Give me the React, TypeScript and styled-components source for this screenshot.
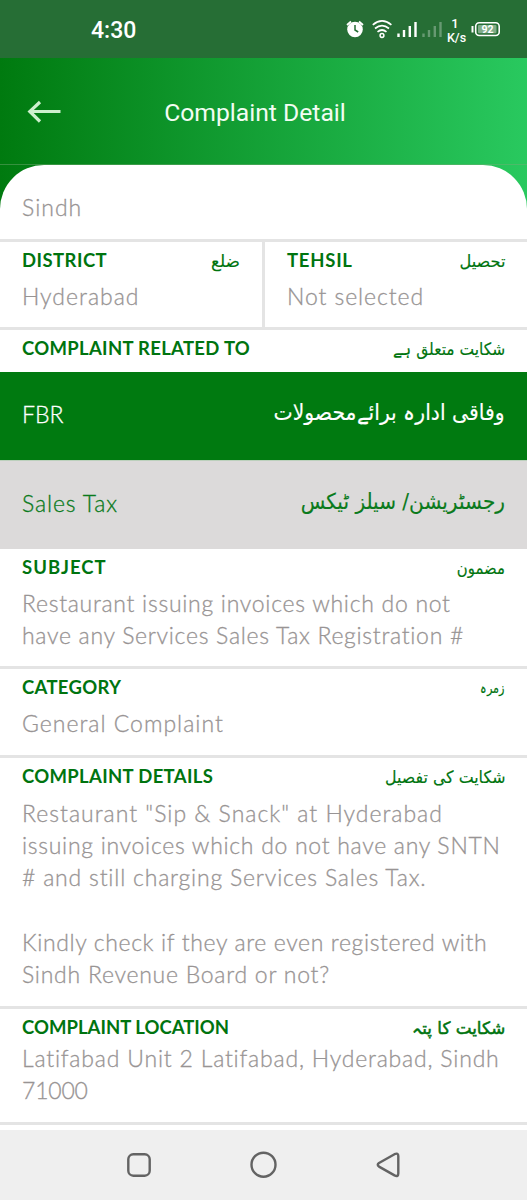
import React from "react";
import styled, { createGlobalStyle } from "styled-components";

const GlobalStyle = createGlobalStyle`
  * { box-sizing: border-box; }
  body { margin: 0; background: #fff; font-family: Lato, sans-serif; }
`;

const Screen = styled.div`
  width: 527px;
  height: 1200px;
  display: flex;
  flex-direction: column;
  overflow: hidden;
  background: #fff;
`;

const StatusBar = styled.header`
  height: 58px;
  flex: none;
  display: flex;
  align-items: center;
  justify-content: space-between;
  padding: 0 26px 0 91px;
  background: #266e35;
  color: #fff;
`;

const Clock = styled.span`
  font: 500 23px/28px Roboto, sans-serif;
  padding-top: 4px;
`;

const Backdrop = styled.div`
  flex: 1;
  min-height: 0;
  display: flex;
  flex-direction: column;
  background: linear-gradient(90deg, #007a0f 0%, #29c95f 100%) top / 100% 160px no-repeat;
`;

const TitleBar = styled.div`
  height: 107px;
  flex: none;
  display: grid;
  grid-template-columns: 100px 1fr 100px;
  align-items: center;
  padding: 0 8px 0 26px;
  border-bottom: 1px solid rgba(120, 170, 120, 0.45);
`;

const Title = styled.h1`
  margin: 0 35px 0 0;
  padding-top: 4px;
  display: flex;
  justify-content: center;
  color: #f3fdf3;
  white-space: nowrap;
  font: 400 24.7px/30px Roboto, sans-serif;
`;

const Sheet = styled.main`
  flex: 1;
  background: #fff;
  border-radius: 44px 44px 0 0;
`;

const Section = styled.section<{ $h: number; $plain?: boolean }>`
  height: ${(p) => p.$h}px;
  padding: 7px 22px 0;
  border-bottom: ${(p) => (p.$plain ? "0" : "3px solid #e4e4e4")};
`;

const Province = styled(Section)`
  padding-top: 26px;
`;

const Pair = styled.div`
  display: grid;
  grid-template-columns: 265px 262px;
  ${Section}:first-child {
    border-right: 3px solid #e4e4e4;
  }
`;

const Head = styled.div<{ $gap: number }>`
  display: flex;
  justify-content: space-between;
  height: 22px;
  margin-bottom: ${(p) => p.$gap}px;
`;

const Label = styled.h2<{ $track?: number }>`
  margin: 0;
  color: #00740f;
  white-space: nowrap;
  font: 700 18.5px/22px Lato, sans-serif;
  letter-spacing: ${(p) => p.$track ?? 0}px;
`;

const Urdu = styled.span<{ $size?: number; $bold?: boolean; $stretch?: number }>`
  direction: rtl;
  white-space: nowrap;
  font-family: "DejaVu Sans", sans-serif;
  font-size: ${(p) => p.$size ?? 17}px;
  line-height: 24px;
  -webkit-text-stroke: ${(p) => (p.$bold ? "0.5px" : "0.15px")} currentColor;
  transform: scaleX(${(p) => p.$stretch ?? 1});
  transform-origin: right;
  color: #00740f;
`;

const Line = styled.div<{ $track?: number }>`
  height: 32.2px;
  white-space: pre;
  color: #989494;
  font: 300 23px/32px Lato, sans-serif;
  -webkit-text-stroke: 0.3px currentColor;
  letter-spacing: ${(p) => p.$track ?? 1}px;
`;

const Band = styled.div<{ $tone: "green" | "grey" }>`
  height: ${(p) => (p.$tone === "green" ? 89 : 88)}px;
  display: flex;
  align-items: center;
  justify-content: space-between;
  padding: 0 22px 4px;
  background: ${(p) => (p.$tone === "green" ? "#007a10" : "#dcdada")};
  border-bottom: ${(p) => (p.$tone === "green" ? "1px solid #bcd0bc" : "0")};
  ${Line}, ${Urdu} {
    color: ${(p) => (p.$tone === "green" ? "#fff" : "#0b7a1c")};
  }
  ${Urdu} {
    padding-bottom: 2px;
  }
`;

const NavBar = styled.nav`
  height: 70px;
  flex: none;
  background: #efefef;
  display: flex;
  padding-left: 113px;
`;

const StatusIcons = () => (
  <svg width="156" height="34" viewBox="345 12 156 34" fill="none" stroke="#fff">
    <circle cx="355" cy="29.5" r="7.8" fill="#fff" stroke="none" />
    <path d="M347 25l4-3.500M363 25l-4-3.500" strokeWidth="1.8" />
    <path d="M355 25v5l3.2 2" stroke="#266e35" strokeWidth="1.5" />
    <circle cx="382" cy="35.5" r="1.9" strokeWidth="1.5" />
    <path d="M377.500 31.800q4.500-3.600 9 0M375 28.500q7-5.800 14 0M372.800 24.800q9.200-7.800 18.600 0" strokeWidth="1.7" />
    <path d="M398.500 37v-3.500M404 37v-7M409.800 37v-11M415.500 37v-15" strokeWidth="2.400" />
    <path d="M423.500 37v-3.500M429 37v-7M434.800 37v-11M440.500 37v-15" strokeWidth="2.400" opacity=".3" />
    <g fill="#fff" stroke="none" fontFamily="Roboto, sans-serif" fontWeight="500" textAnchor="middle">
      <text x="455" y="27.700" fontSize="13">1</text>
      <text x="456.500" y="41.700" fontSize="12.500">K/s</text>
    </g>
    <path d="M472.500 26v6.500" strokeWidth="2" />
    <rect x="475.700" y="22.700" width="23.500" height="12.800" rx="3.500" strokeWidth="1.600" />
    <rect x="478" y="25" width="18.500" height="8.200" rx="1" fill="#7fac88" stroke="none" />
    <text x="487.500" y="33" fontSize="10.500" fontWeight="700" fill="#fff" stroke="none" textAnchor="middle" fontFamily="Roboto, sans-serif">92</text>
  </svg>
);

const BackArrow = () => (
  <svg width="36" height="24" viewBox="26 98.500 36 24" fill="none" stroke="#cdf0cd" strokeWidth="3.200">
    <path d="M60.500 111H30M40 101.500L29.800 111L40 121" />
  </svg>
);

const NavIcons = () => (
  <svg width="300" height="70" viewBox="113 1130 300 70" fill="none" stroke="#636363" strokeWidth="2.400" strokeLinejoin="round">
    <rect x="128.300" y="1154.300" width="21.400" height="21.400" rx="5" />
    <circle cx="263.500" cy="1164.700" r="12" />
    <path d="M379 1163L394.500 1154.200Q398.300 1152.600 398.300 1156V1173.500Q398.300 1177.200 394.500 1175.400L379 1166.600Q376.500 1164.800 379 1163Z" />
  </svg>
);

export default function App() {
  return (
    <>
      <GlobalStyle />
      <Screen>
        <StatusBar><Clock>4:30</Clock><StatusIcons /></StatusBar>
        <Backdrop>
          <TitleBar><BackArrow /><Title>Complaint Detail</Title></TitleBar>
          <Sheet>
            <Province $h={77}><Line>Sindh</Line></Province>
            <Pair>
              <Section $h={88}>
                <Head $gap={9}><Label $track={0.45}>DISTRICT</Label><Urdu>ضلع</Urdu></Head>
                <Line>Hyderabad</Line>
              </Section>
              <Section $h={88}>
                <Head $gap={9}><Label $track={0.75}>TEHSIL</Label><Urdu $stretch={0.95}>تحصیل</Urdu></Head>
                <Line $track={0.92}>Not selected</Line>
              </Section>
            </Pair>
            <Section $h={42} $plain>
              <Head $gap={0}><Label $track={0.3}>COMPLAINT RELATED TO</Label><Urdu $stretch={0.91}>شکایت متعلق ہے</Urdu></Head>
            </Section>
            <Band $tone="green"><Line $track={0}>FBR</Line><Urdu $size={22} $stretch={0.926}>وفاقی ادارہ برائےمحصولات</Urdu></Band>
            <Band $tone="grey"><Line $track={0.85}>Sales Tax</Line><Urdu $size={22} $stretch={0.912}>رجسٹریشن/ سیلز ٹیکس</Urdu></Band>
            <Section $h={120}>
              <Head $gap={9}><Label $track={1}>SUBJECT</Label><Urdu $stretch={0.875}>مضمون</Urdu></Head>
              <Line $track={0.71}>Restaurant issuing invoices which do not</Line>
              <Line $track={0.7}>have any Services Sales Tax Registration #</Line>
            </Section>
            <Section $h={89}>
              <Head $gap={9}><Label $track={0.3}>CATEGORY</Label><Urdu $size={15} $stretch={0.75}>زمرہ</Urdu></Head>
              <Line>General Complaint</Line>
            </Section>
            <Section $h={251}>
              <Head $gap={10}><Label $track={0.32}>COMPLAINT DETAILS</Label><Urdu $stretch={0.93}>شکایت کی تفصیل</Urdu></Head>
              <Line>Restaurant "Sip &amp; Snack" at Hyderabad</Line>
              <Line $track={0.7}>issuing invoices which do not have any SNTN</Line>
              <Line $track={0.8}># and still charging Services Sales Tax.</Line>
              <Line />
              <Line $track={0.63}>Kindly check if they are even registered with</Line>
              <Line $track={0.74}>Sindh Revenue Board or not?</Line>
            </Section>
            <Section $h={116}>
              <Head $gap={4}><Label $track={0.02}>COMPLAINT LOCATION</Label><Urdu $bold $stretch={0.985}>شکایت کا پتہ</Urdu></Head>
              <Line $track={0.8}>Latifabad Unit 2 Latifabad, Hyderabad, Sindh</Line>
              <Line $track={-0.2}>71000</Line>
            </Section>
          </Sheet>
        </Backdrop>
        <NavBar><NavIcons /></NavBar>
      </Screen>
    </>
  );
}
